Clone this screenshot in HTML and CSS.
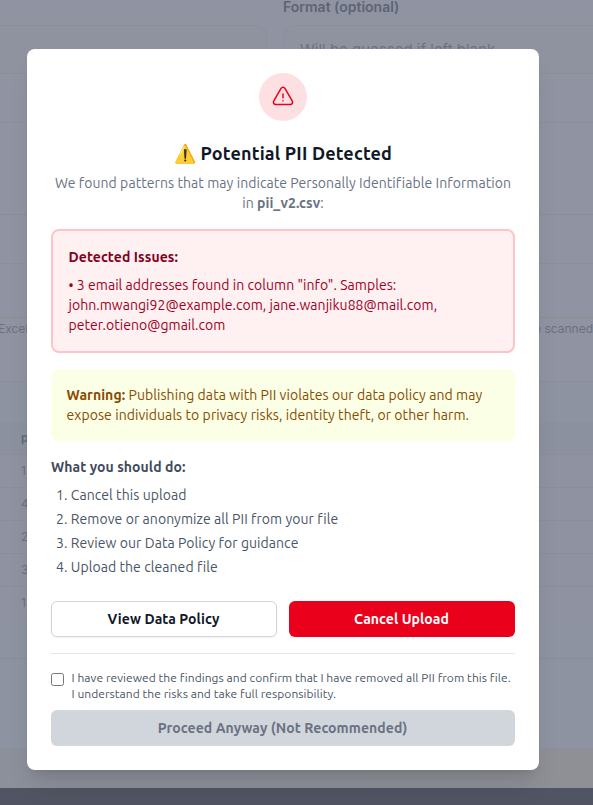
FILE: index.html
```
<!DOCTYPE html>
<html lang="en">
<head>
    <meta charset="UTF-8">
    <meta name="viewport" content="width=device-width, initial-scale=1.0">
    <title>Potential PII Detected</title>
    <link rel="stylesheet" href="styles.css">
</head>
<body>
    <div class="page">
        <div class="form-row">
            <div class="field">
                <div class="label"></div>
                <div class="input"></div>
            </div>
            <div class="field">
                <label class="label">Format (optional)</label>
                <div class="input input-format">Will be guessed if left blank</div>
            </div>
        </div>
        <div class="line line-input"></div>
        <div class="line line-card"></div>
        <div class="line line-upload"></div>
        <div class="line line-file"></div>
        <div class="note">
            <span class="note-start">Excel</span>
            <span class="note-end">be scanned</span>
        </div>
        <div class="preview">
            <div class="row row-head">p</div>
            <div class="row">12</div>
            <div class="row">4</div>
            <div class="row">2</div>
            <div class="row">3</div>
            <div class="row row-last">18</div>
        </div>
        <div class="spacer"></div>
        <div class="band"></div>
        <div class="footer"></div>
    </div>

    <div class="overlay">
        <div class="modal">
            <div class="icon-circle">
                <svg width="24" height="24" viewBox="0 0 24 24" fill="none" stroke="#eb001b" stroke-width="1.5" stroke-linecap="round" stroke-linejoin="round">
                    <path d="M12 9v3.75m-9.303 3.376c-.866 1.5.217 3.374 1.948 3.374h14.71c1.73 0 2.813-1.874 1.948-3.374L13.949 3.378c-.866-1.5-3.032-1.5-3.898 0L2.697 16.126zM12 15.75h.007v.008H12v-.008z"/>
                </svg>
            </div>
            <h3 class="title">⚠️ Potential PII Detected</h3>
            <p class="subtitle">We found patterns that may indicate Personally Identifiable Information<br>in <strong>pii_v2.csv</strong>:</p>

            <div class="issues">
                <h4 class="issues-title">Detected Issues:</h4>
                <p class="issue">• 3 email addresses found in column "info". Samples:<br>john.mwangi92@example.com, jane.wanjiku88@mail.com,<br>peter.otieno@gmail.com</p>
            </div>

            <p class="warning"><strong>Warning:</strong> Publishing data with PII violates our data policy and may<br>expose individuals to privacy risks, identity theft, or other harm.</p>

            <h4 class="steps-title">What you should do:</h4>
            <ol class="steps">
                <li>Cancel this upload</li>
                <li>Remove or anonymize all PII from your file</li>
                <li>Review our Data Policy for guidance</li>
                <li>Upload the cleaned file</li>
            </ol>

            <div class="actions">
                <button class="btn btn-outline">View Data Policy</button>
                <button class="btn btn-danger">Cancel Upload</button>
            </div>

            <div class="confirm">
                <label class="confirm-label">
                    <input type="checkbox" class="checkbox">
                    <span>I have reviewed the findings and confirm that I have removed all PII from this file.<br>I understand the risks and take full responsibility.</span>
                </label>
                <button class="btn btn-disabled" disabled>Proceed Anyway (Not Recommended)</button>
            </div>
        </div>
    </div>
</body>
</html>
```
FILE: styles.css
```
* {
    box-sizing: border-box;
    margin: 0;
    padding: 0;
}
body {
    height: 805px;
    overflow: hidden;
    font-family: Ubuntu, "Noto Sans", sans-serif;
    font-size: 14px;
    line-height: 20px;
    letter-spacing: 0.07px;
}

/* page behind the dialog */
.page {
    display: flex;
    flex-direction: column;
    height: 805px;
    background: #fdfcfd;
    font-family: Inter, sans-serif;
    letter-spacing: 0;
    color: #6b7280;
}
.form-row {
    display: grid;
    grid-template-columns: 267px 1fr;
    gap: 16px;
    height: 73px;
}
.label {
    display: block;
    height: 25px;
    line-height: 14px;
    font-weight: 600;
    color: #374151;
}
.input {
    height: 48px;
    border: 1px solid #f3ead8;
    border-width: 1px 1px 0 0;
    border-radius: 0 12px 0 0;
    background: #f9fafb;
    font-size: 15px;
    line-height: 47px;
    white-space: nowrap;
}
.input-format {
    padding-left: 16px;
    border-width: 1px 0 0 1px;
    border-radius: 12px 0 0 0;
}
.line {
    border-top: 1px solid #f0ead8;
}
.line-input {
    height: 49px;
}
.line-card {
    height: 92px;
}
.line-upload {
    height: 49px;
    border-color: #f5dfb0;
}
.line-file {
    height: 54px;
}
.note {
    display: flex;
    justify-content: space-between;
    height: 64px;
    padding-top: 2px;
    border-top: 1px solid #f5dfb0;
    font-size: 12px;
    line-height: 17px;
}
.note-start {
    margin-left: -2px;
}
.preview {
    height: 278px;
    padding-top: 40px;
    border-top: 1px solid #e5e7eb;
    border-bottom: 1px solid #dbe0ea;
    background: #f4f9fb;
}
.row {
    height: 33px;
    padding-left: 21px;
    border-top: 1px solid #e5e7eb;
    background: #fbfbfd;
    font-size: 12px;
    line-height: 32px;
}
.row-head {
    height: 32px;
    border-top: none;
    background: #f0f2f5;
    font-weight: 600;
    color: #4b5563;
}
.row-last {
    height: 34px;
}
.spacer {
    flex: 1;
    background: #f8faff;
}
.band {
    height: 40px;
    background: linear-gradient(90deg, #f0eee8, #f5edcf);
}
.footer {
    height: 17px;
    background: #04040a;
}

.overlay {
    position: absolute;
    inset: 0;
    display: flex;
    justify-content: center;
    align-items: flex-start;
    padding: 49px 27px 0 0;
    background: rgba(107, 112, 129, 0.75);
}
.band,
.footer {
    flex-shrink: 0;
}
.modal {
    width: 512px;
    height: 721px;
    padding: 24px;
    border-radius: 8px;
    background: #fff;
    box-shadow: 0 20px 25px -5px rgba(0, 0, 0, 0.1), 0 8px 10px -6px rgba(0, 0, 0, 0.1);
    white-space: nowrap;
}
.icon-circle {
    display: flex;
    align-items: center;
    justify-content: center;
    width: 48px;
    height: 48px;
    margin: 0 auto;
    border-radius: 50%;
    background: #ffe0e2;
}
.title {
    margin-top: 20px;
    font-size: 18px;
    line-height: 24px;
    letter-spacing: 0.16px;
    text-align: center;
    color: #101828;
}
.subtitle {
    margin-top: 8px;
    text-align: center;
    color: #6a7282;
}
.issues {
    height: 124px;
    margin-top: 16px;
    padding: 16px 15.5px;
    border: 2px solid #ffc3c8;
    border-radius: 8px;
    background: #fff0f1;
}
.issues-title {
    font-size: 14px;
    color: #82001c;
}
.issue {
    margin-top: 8px;
    letter-spacing: 0.04px;
    color: #a0001f;
}
.warning {
    margin-top: 16px;
    padding: 16px 15.5px;
    border-radius: 8px;
    background: #fbffe6;
    color: #894b00;
}
.steps-title {
    margin-top: 16px;
    font-size: 14px;
    color: #414b5b;
}
.steps {
    display: grid;
    gap: 4px;
    margin-top: 8px;
    list-style-position: inside;
    padding-left: 5px;
    color: #4a5565;
}
.actions {
    display: grid;
    grid-template-columns: 1fr 1fr;
    gap: 12px;
    margin-top: 24px;
}
.btn {
    width: 100%;
    height: 36px;
    padding-right: 1px;
    border: none;
    border-radius: 6px;
    font: inherit;
    font-weight: 700;
    letter-spacing: 0.08px;
}
.btn-outline {
    border: 1px solid #d1d5dc;
    background: #fff;
    color: #101828;
    box-shadow: 0 1px 2px rgba(0, 0, 0, 0.05);
}
.btn-danger {
    background: #eb001b;
    color: #fff;
}
.btn-disabled {
    display: block;
    margin-top: 8px;
    background: #d1d5dc;
    color: #6a7282;
}
.confirm {
    margin-top: 16px;
    padding-top: 16px;
    border-top: 1px solid #e5e7eb;
}
.confirm-label {
    display: flex;
    align-items: flex-start;
    gap: 7.5px;
    font-size: 12px;
    line-height: 16px;
    letter-spacing: 0.05px;
    color: #4a5565;
}
.checkbox {
    width: 13px;
    height: 13px;
    margin-top: 3px;
}
```
